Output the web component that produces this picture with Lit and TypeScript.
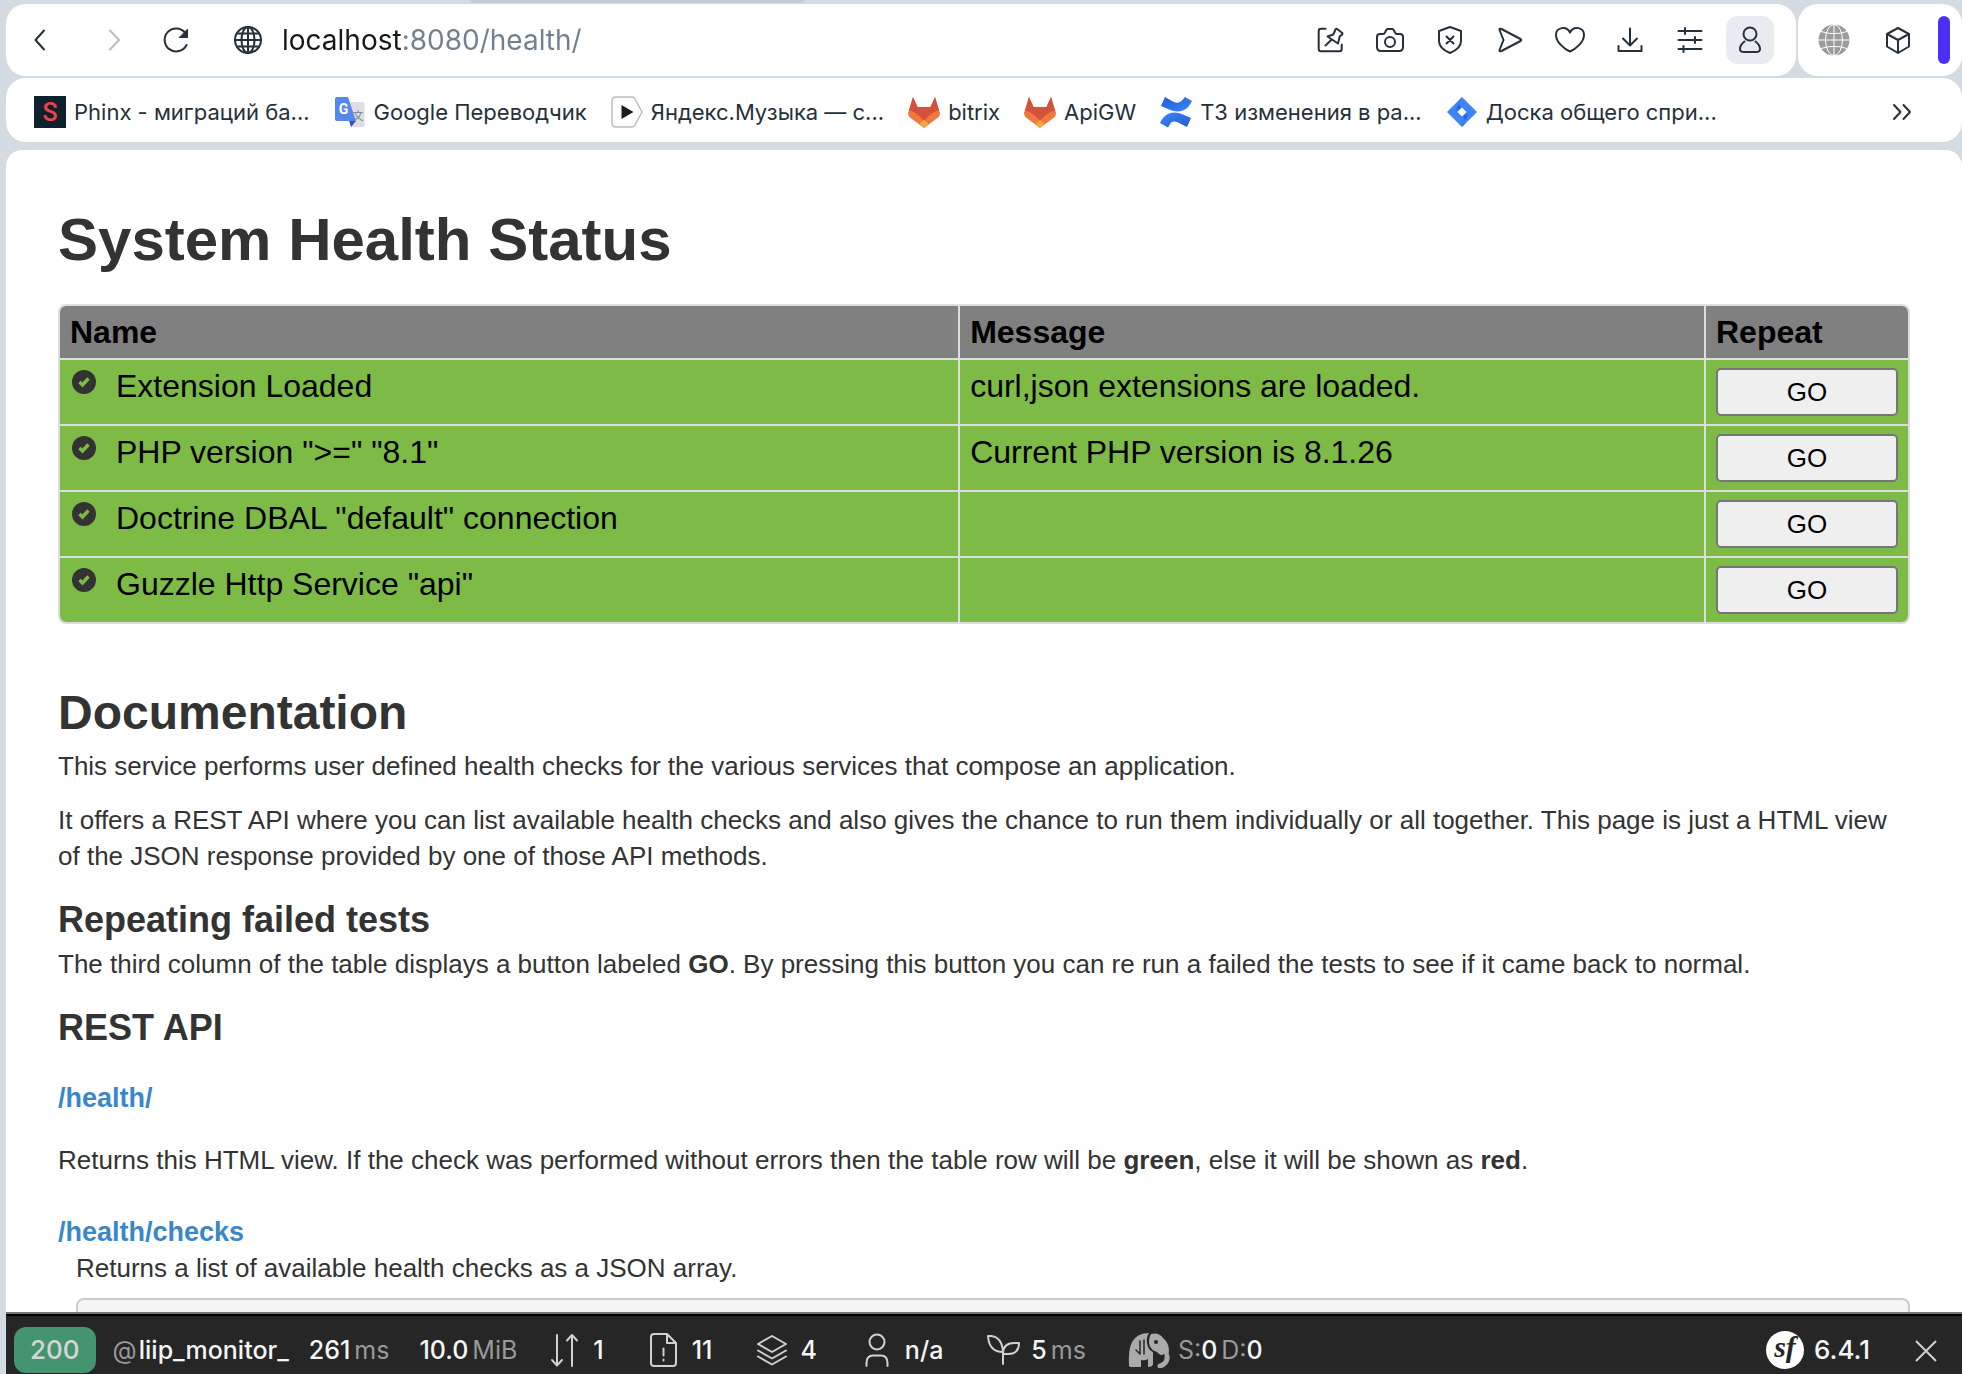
import { LitElement, html, svg, css, nothing } from "lit";
import { customElement, property, state } from "lit/decorators.js";

type Glyph = ReturnType<typeof svg>;

const icons: Record<string, Glyph> = {
  back: svg`<path d="M28 14.500 L19.500 24 L28 33.500"/>`,
  forward: svg`<path d="M26 14.500 L35 24 L26 33.500"/>`,
  reload: svg`<path d="M33 16.500 A11.500 11.500 0 1 0 34.500 29"/><path class="solid" d="M35.500 13.500 V21.500 H27.500 Z"/>`,
  globe: svg`<circle cx="24" cy="24" r="13"/><ellipse cx="24" cy="24" rx="6.500" ry="13"/><path d="M24 11 V37 M11 24 H37 M13 17.500 H35 M13 30.500 H35"/>`,
  pin: svg`<path d="M19.500 12.700 H15 Q12.700 12.700 12.700 15 V33 Q12.700 35.300 15 35.300 H33.500 Q35.700 35.300 35.700 33 V28.500"/><path d="M29.500 13.500 Q30.500 12.300 31.500 13.200 L36 16.800 Q37 17.800 36 18.600 L33.700 20.500 L32 27.500 L21.500 20.500 L27.300 18.500 Z M25.500 23.800 L19.500 29.500"/>`,
  camera: svg`<path d="M14 18 H17 Q18.500 18 19 16.500 L20 14.500 Q20.500 13 22 13 H26 Q27.500 13 28 14.500 L29 16.500 Q29.500 18 31 18 H34 Q37 18 37 21 V31 Q37 35 33 35 H15 Q11 35 11 31 V21 Q11 18 14 18 Z"/><circle cx="24" cy="26" r="5"/>`,
  shield: svg`<path d="M24 11 L35 15 V25 Q35 32.500 24 37 Q13 32.500 13 25 V15 Z"/><path d="M20.500 20.500 L27.500 27.500 M27.500 20.500 L20.500 27.500"/>`,
  send: svg`<path d="M13.500 14 Q13 12 15.500 13 L34.500 23 Q36 24 34.500 25 L15.500 35 Q13 36 13.500 34 L17.500 24 Z"/>`,
  heart: svg`<path d="M24 35.500 C18 33 10 26 10 19 C10 11 20.500 9.500 24 16.500 C27.500 9.500 38 11 38 19 C38 26 30 33 24 35.500 Z"/>`,
  download: svg`<path d="M24 12.500 V29 M17 22.500 L24 29.500 L31 22.500 M12.500 30 V35 H35.500 V30"/>`,
  sliders: svg`<path d="M12.500 15 H35.500 M12.500 24 H35.500 M12.500 33 H35.500 M19 12 V18 M29 21 V27 M17.500 30 V36"/>`,
  person: svg`<circle cx="24" cy="18" r="6.500"/><path d="M18.500 25.500 Q14 29 14 33 Q14 36 18 36 H30 Q34 36 34 33 Q34 29 29.500 25.500"/>`,
  cube: svg`<path d="M24 12 L35 18 V30.500 L24 37 L13 30.500 V18 Z M13 18 L24 24 L35 18 M24 24 V37"/>`,
  world: svg`<circle class="fill" cx="24" cy="24" r="15.500"/><path class="lines" d="M24 8.500 V39.500 M8.500 24 H39.500 M11 15.500 Q24 20 37 15.500 M11 32.500 Q24 28 37 32.500"/><ellipse class="lines" cx="24" cy="24" rx="8.500" ry="15.500"/>`,
  more: svg`<path d="M16 17 L22.500 24 L16 31 M25.500 17 L32 24 L25.500 31"/>`,
};

const favicons: Record<string, Glyph> = {
  phinx: svg`<rect width="32" height="32" fill="#11202d"/><text x="16" y="25" text-anchor="middle" font-family="Roboto, sans-serif" font-size="25" font-weight="500" fill="#ee4444">S</text>`,
  translate: svg`<path d="M14 6 H28.500 Q30.500 6 30.500 8 V29 Q30.500 31 28.500 31 H17 Z" fill="#dedede"/><path d="M17 31 L22 25 L15 24.500 Z" fill="#3554b8"/><path d="M2.500 1 H14 L22 25 H3 Q1 25 1 23 V2.500 Q1 1 2.500 1 Z" fill="#5588ee"/><text x="9.500" y="17.500" text-anchor="middle" font-family="Roboto, sans-serif" font-size="14" font-weight="700" fill="#fff">G</text><text x="24" y="24" text-anchor="middle" font-family="Noto Sans CJK SC, sans-serif" font-size="11" fill="#6b8090">文</text>`,
  music: svg`<path d="M5 1 H21 Q23 1 24 3 L31 16 L24 29 Q23 31 21 31 H5 Q1 31 1 27 V5 Q1 1 5 1 Z" fill="#fff" stroke="#bcbcbc" stroke-width="1.500"/><path d="M10.500 9 L22.500 16 L10.500 23 Z" fill="#1c1c1c"/>`,
  gitlab: svg`<path d="M5 1 L9.500 11 H22.500 L27 1 L32 17 Q32 20 30 21.500 L16 32 L2 21.500 Q0 20 0 17 Z" fill="#ee7840"/><path d="M5 1 L9.500 11 H22.500 L27 1 L31 14.500 Q25 15 16 24.500 Q7 15 1 14.500 Z" fill="#d4513a"/><path d="M16 24 L21 28.500 L16 32 L11 28.500 Z" fill="#f3a846"/>`,
  confluence: svg`<defs><linearGradient id="ca" x1="0" y1="0" x2="1" y2="1"><stop offset="0" stop-color="#1f5bd0"/><stop offset="1" stop-color="#3f87fb"/></linearGradient><linearGradient id="cb" x1="1" y1="1" x2="0" y2="0"><stop offset="0" stop-color="#1f5bd0"/><stop offset="1" stop-color="#3f87fb"/></linearGradient></defs><path d="M5 1 L12 5 Q17 8 21 5.500 L25 1 L32 5 Q29 12 23 14.500 Q17 17 9 13.500 L1 10 Z" fill="url(#ca)"/><path d="M27 31 L20 27.500 Q15 24 11 26.500 L8 31.500 L0 27 Q3 20 9 17.500 Q15 15 23 18.500 L31 22 Z" fill="url(#cb)"/>`,
  jira: svg`<path d="M16 1 L31 16 L16 31 L1 16 Z" fill="#3f84f7"/><path d="M16 1 L14 3.500 Q12 8 15 12 L10 14 Z" fill="#2963d0"/><path d="M16 31 L18 28.500 Q20 24 17 20 L22 18 Z" fill="#2963d0"/><path d="M16 11.500 L20.500 16 L16 20.500 L11.500 16 Z" fill="#fff"/>`,
};

const metrics: Record<string, Glyph> = {
  arrows: svg`<path d="M10 3 V33 M5 28 L10 33.500 L15 28 M25 34 V3.500 M20 8.500 L25 3 L30 8.500"/>`,
  file: svg`<path d="M21 2 H8 Q5 2 5 5 V31 Q5 34 8 34 H27 Q30 34 30 31 V11 Z M21 2 V11 H30 M17.500 16.500 V23.500 M17.500 27.500 V28.500"/>`,
  layers: svg`<path d="M18 4 L32 12 L18 20 L4 12 Z M4 18.500 L18 26.500 L32 18.500 M4 24.500 L18 32.500 L32 24.500"/>`,
  user: svg`<circle cx="18" cy="10" r="7.500"/><path d="M7.500 34 V31 Q7.500 23.500 14 23.500 H22 Q28.500 23.500 28.500 31 V34"/>`,
  sprout: svg`<path d="M18 32 V16 M18 20 Q4 20 3 4 H6 Q17 5 18 20 M18 22 Q18 11 29 11 H34 Q34 22 23 22 Z"/>`,
};

@customElement("ui-icon")
export class UiIcon extends LitElement {
  @property() name = "";
  static styles = css`
    :host { display: block; line-height: 0; }
    svg { width: 48px; height: 48px; fill: none; stroke: currentColor; stroke-width: 2; stroke-linecap: round; stroke-linejoin: round; }
    .solid { fill: currentColor; stroke-width: 1; }
    .fill { fill: #9b9b9b; stroke: none; }
    .lines { stroke: #ffffff; stroke-width: 1; }
  `;
  render() {
    return html`<svg viewBox="0 0 48 48" aria-hidden="true">${icons[this.name]}</svg>`;
  }
}

@customElement("browser-chrome")
export class BrowserChrome extends LitElement {
  private tools = [
    ["pin", "Pinboard"], ["camera", "Snapshot"], ["shield", "Privacy protection"], ["send", "Share"],
    ["heart", "Bookmark"], ["download", "Downloads"], ["sliders", "Easy setup"],
  ];
  private bookmarks = [
    ["phinx", "Phinx - миграций ба..."],
    ["translate", "Google Переводчик"],
    ["music", "Яндекс.Музыка — с..."],
    ["gitlab", "bitrix"],
    ["gitlab", "ApiGW"],
    ["confluence", "ТЗ изменения в ра..."],
    ["jira", "Доска общего спри..."],
  ];

  static styles = css`
    :host { display: block; font-family: Inter, "Noto Sans", sans-serif; color: #26303a; }
    .tabs { height: 4px; }
    .tab { width: 17%; height: 3px; margin-left: 24%; background: #c2cad2; border-radius: 0 0 4px 4px; }
    .bars { display: flex; gap: 2px; padding-left: 6px; }
    .bar { display: flex; align-items: center; height: 72px; background: #ffffff; border-radius: 20px; box-sizing: border-box; }
    .main { flex: 1; padding: 0 22px 0 10px; }
    .side { padding: 0 12px; gap: 16px; }
    .nav { display: flex; gap: 20px; margin-right: 24px; }
    .tools { display: flex; gap: 12px; }
    button { width: 48px; height: 48px; padding: 0; border: 0; background: none; color: inherit; border-radius: 12px; cursor: pointer; }
    button:disabled { color: #b9bdc1; cursor: default; }
    .active { background: #e8ecf0; }
    .url {
      flex: 1; min-width: 0; height: 48px; padding: 0 0 0 10px; border: 0; outline: none;
      font: 28px/32px Inter, "Noto Sans", sans-serif;
      color: transparent; background: linear-gradient(90deg, #14181c 132px, #71808f 132px); -webkit-background-clip: text; background-clip: text;
    }
    .handle { width: 12px; height: 48px; border-radius: 6px; background: #4a2ff5; }
    .marks { display: flex; align-items: center; box-sizing: border-box; height: 64px; margin: 2px 0 8px 6px; padding: 4px 36px 0 28px; background: #ffffff; border-radius: 20px; }
    .list { display: flex; flex: 1; gap: 24px; }
    .mark { display: flex; align-items: center; gap: 8px; font-size: 22px; line-height: 32px; color: inherit; text-decoration: none; white-space: nowrap; }
    .mark svg { width: 32px; height: 32px; }
  `;

  render() {
    return html`
      <div class="tabs"><div class="tab"></div></div>
      <div class="bars">
        <div class="bar main">
          <div class="nav">
            <button aria-label="Back"><ui-icon name="back"></ui-icon></button>
            <button aria-label="Forward" disabled><ui-icon name="forward"></ui-icon></button>
            <button aria-label="Reload"><ui-icon name="reload"></ui-icon></button>
          </div>
          <ui-icon name="globe"></ui-icon>
          <input class="url" aria-label="Address" .value=${"localhost:8080/health/"} />
          <div class="tools">
            ${this.tools.map(([icon, label]) => html`<button aria-label=${label}><ui-icon name=${icon}></ui-icon></button>`)}
            <button class="active" aria-label="Profile"><ui-icon name="person"></ui-icon></button>
          </div>
        </div>
        <div class="bar side">
          <button aria-label="Site"><ui-icon name="world"></ui-icon></button>
          <button aria-label="Extensions"><ui-icon name="cube"></ui-icon></button>
          <div class="handle"></div>
        </div>
      </div>
      <nav class="marks">
        <div class="list">
          ${this.bookmarks.map(([icon, label]) => html`
            <a class="mark" href="#"><svg viewBox="0 0 32 32" aria-hidden="true">${favicons[icon]}</svg>${label}</a>`)}
        </div>
        <button aria-label="More bookmarks"><ui-icon name="more"></ui-icon></button>
      </nav>
    `;
  }
}

@customElement("health-page")
export class HealthPage extends LitElement {
  @state() private checks = [
    { name: "Extension Loaded", message: "curl,json extensions are loaded." },
    { name: 'PHP version ">=" "8.1"', message: "Current PHP version is 8.1.26" },
    { name: 'Doctrine DBAL "default" connection', message: "" },
    { name: 'Guzzle Http Service "api"', message: "" },
  ];

  static styles = css`
    :host { display: block; padding: 54px 52px 0; font: 26px/36px "Liberation Sans", Arial, sans-serif; color: #333333; }
    h1, h2, h3, p { margin: 0; }
    h1 { font-size: 60px; line-height: 72px; margin-bottom: 28px; }
    h2 { font-size: 48px; line-height: 70px; margin-top: 54px; }
    h3 { font-size: 36px; line-height: 52px; padding-top: 2px; }
    p { margin-bottom: 18px; }
    table { width: 100%; table-layout: fixed; border: 2px solid #dddddd; border-collapse: separate; border-spacing: 0; border-radius: 8px; overflow: hidden; font-size: 32px; color: #000000; }
    .name { width: 48.6%; }
    .repeat { width: 204px; }
    th, td { padding: 8px 10px; text-align: left; vertical-align: top; box-sizing: border-box; }
    th { background: #808080; }
    td { background: #7dbb46; border-top: 2px solid #dddddd; }
    th + th, td + td { border-left: 2px solid #dddddd; }
    .check { display: flex; gap: 18px; }
    .check svg { width: 28px; height: 28px; }
    .go { display: block; width: 100%; height: 48px; padding: 0; border: 2px solid #767676; border-radius: 5px; background: #efefef; color: #000000; font: 26px/36px "Liberation Sans", Arial, sans-serif; }
    .route { display: block; width: fit-content; font-weight: bold; font-size: 27px; color: #3a87c8; text-decoration: none; }
    .first { margin: 26px 0; }
    .view { margin-bottom: 36px; }
    .nested { margin-left: 18px; }
    .list { margin-bottom: 12px; }
    pre { height: 120px; margin: 0; border: 2px solid #cccccc; border-radius: 8px; background: #f5f5f5; }
  `;

  render() {
    return html`
      <h1>System Health Status</h1>
      <table>
        <colgroup><col class="name" /><col /><col class="repeat" /></colgroup>
        <thead><tr><th>Name</th><th>Message</th><th>Repeat</th></tr></thead>
        <tbody>
          ${this.checks.map((c) => html`<tr>
            <td><div class="check"><svg viewBox="0 0 28 28" aria-hidden="true"><circle cx="14" cy="14" r="12" fill="#333333"/><path d="M9.500 14 L12.500 17 L18.500 10.500" fill="none" stroke="#7dbb46" stroke-width="3.500"/></svg><span>${c.name}</span></div></td>
            <td>${c.message || nothing}</td>
            <td><button class="go">GO</button></td>
          </tr>`)}
        </tbody>
      </table>
      <h2>Documentation</h2>
      <p>This service performs user defined health checks for the various services that compose an application.</p>
      <p>It offers a REST API where you can list available health checks and also gives the chance to run them individually or all together. This page is just a HTML view of the JSON response provided by one of those API methods.</p>
      <h3>Repeating failed tests</h3>
      <p>The third column of the table displays a button labeled <b>GO</b>. By pressing this button you can re run a failed the tests to see if it came back to normal.</p>
      <h3>REST API</h3>
      <a class="route first" href="#">/health/</a>
      <p class="view">Returns this HTML view. If the check was performed without errors then the table row will be <b>green</b>, else it will be shown as <b>red</b>.</p>
      <a class="route" href="#">/health/checks</a>
      <div class="nested">
        <p class="list">Returns a list of available health checks as a JSON array.</p>
        <pre></pre>
      </div>
    `;
  }
}

@customElement("debug-toolbar")
export class DebugToolbar extends LitElement {
  static styles = css`
    :host { display: flex; align-items: center; box-sizing: border-box; height: 60px; border-top: 2px solid #000000; box-shadow: 0 -2px 0 #777777; background: #262626; color: #f5f5f5; padding: 10px 12px 0 8px; font: 25px/36px Inter, "Noto Sans", sans-serif; white-space: nowrap; position: relative; }
    .status { padding: 5px 16px; border-radius: 12px; background: #43946f; color: #d6d6d6; font-size: 26px; font-weight: 500; margin-right: 17px; }
    .item { display: flex; align-items: center; gap: 4px; font-weight: 500; }
    .route { gap: 2px; margin-right: 20px; }
    .time { margin-right: 30px; }
    .memory { margin-right: 30px; }
    .icon { gap: 10px; margin-right: 42px; }
    .unit { color: #999999; font-weight: 400; }
    .icon svg { width: 36px; height: 36px; fill: none; stroke: #d0d0d0; stroke-width: 2; stroke-linecap: round; stroke-linejoin: round; }
    .icon .php { width: 42px; height: 36px; stroke: none; fill: #aaaaaa; }
    .db { gap: 8px; }
    .logo { display: flex; align-items: center; gap: 10px; margin-left: auto; font-size: 26px; font-weight: 500; }
    .logo svg { width: 38px; height: 38px; }
    button { margin-left: 32px; padding: 4px 0 0; width: 48px; height: 48px; border: 0; background: none; }
    button svg { width: 24px; height: 24px; stroke: #d0d0d0; stroke-width: 2; }
  `;

  private metric(icon: string, value: string, unit = "") {
    return html`<div class="item icon"><svg viewBox="0 0 36 36" aria-hidden="true">${metrics[icon]}</svg>
      <span class="item"><span>${value}</span>${unit ? html`<span class="unit">${unit}</span>` : nothing}</span></div>`;
  }

  render() {
    return html`
      <span class="status">200</span>
      <span class="item route"><span class="unit">@</span><span>liip_monitor_</span></span>
      <span class="item time"><span>261</span><span class="unit">ms</span></span>
      <span class="item memory"><span>10.0</span><span class="unit">MiB</span></span>
      ${this.metric("arrows", "1")}
      ${this.metric("file", "11")}
      ${this.metric("layers", "4")}
      ${this.metric("user", "n/a")}
      ${this.metric("sprout", "5", "ms")}
      <div class="item icon db">
        <svg class="php" viewBox="0 0 42 36" aria-hidden="true">
          <path d="M1 34 Q0 18 4 10 Q9 1 21 1 Q18 6 19 11 Q20 18 25 20 V32 Q25 35 20 35 V27 Q17 29 13 28 V35 H5 Q1 35 1 34 Z"/>
          <path d="M23 2 Q31 0 35 6 Q41 11 41 19 L40 26 L36 22 Q33 25 29 20 Q22 18 21 11 Q21 5 23 2 Z"/>
          <path d="M12 9 V22 M8 18 L12 22 M16 8 V22" stroke="#262626" stroke-width="1.500" fill="none"/>
          <circle cx="28" cy="10" r="2" fill="#262626"/>
          <path d="M39 24 Q40 31 32 34" fill="none" stroke="#aaaaaa" stroke-width="5" stroke-dasharray="2 1"/>
        </svg>
        <span class="item"><span><span class="unit">S:</span>0</span><span><span class="unit">D:</span>0</span></span>
      </div>
      <div class="logo">
        <svg viewBox="0 0 38 38" aria-hidden="true"><circle cx="19" cy="19" r="19" fill="#ffffff"/><text x="19" y="26" text-anchor="middle" font-family="Liberation Serif, serif" font-style="italic" font-weight="700" font-size="30" fill="#262626">sf</text></svg>
        <span>6.4.1</span>
      </div>
      <button aria-label="Close toolbar"><svg viewBox="0 0 24 24" aria-hidden="true"><path d="M2 2 L22 22 M22 2 L2 22"/></svg></button>
    `;
  }
}

@customElement("app-root")
export class AppRoot extends LitElement {
  static styles = css`
    :host { display: flex; flex-direction: column; height: 100vh; overflow: hidden; background: #d3dbe3; }
    .view { display: flex; flex-direction: column; flex: 1; min-height: 0; margin-left: 6px; background: #ffffff; border-radius: 16px 16px 0 0; overflow: hidden; }
    .scroll { flex: 1; min-height: 0; overflow: hidden; }
  `;
  render() {
    return html`
      <browser-chrome></browser-chrome>
      <div class="view">
        <main class="scroll"><health-page></health-page></main>
        <debug-toolbar></debug-toolbar>
      </div>
    `;
  }
}
